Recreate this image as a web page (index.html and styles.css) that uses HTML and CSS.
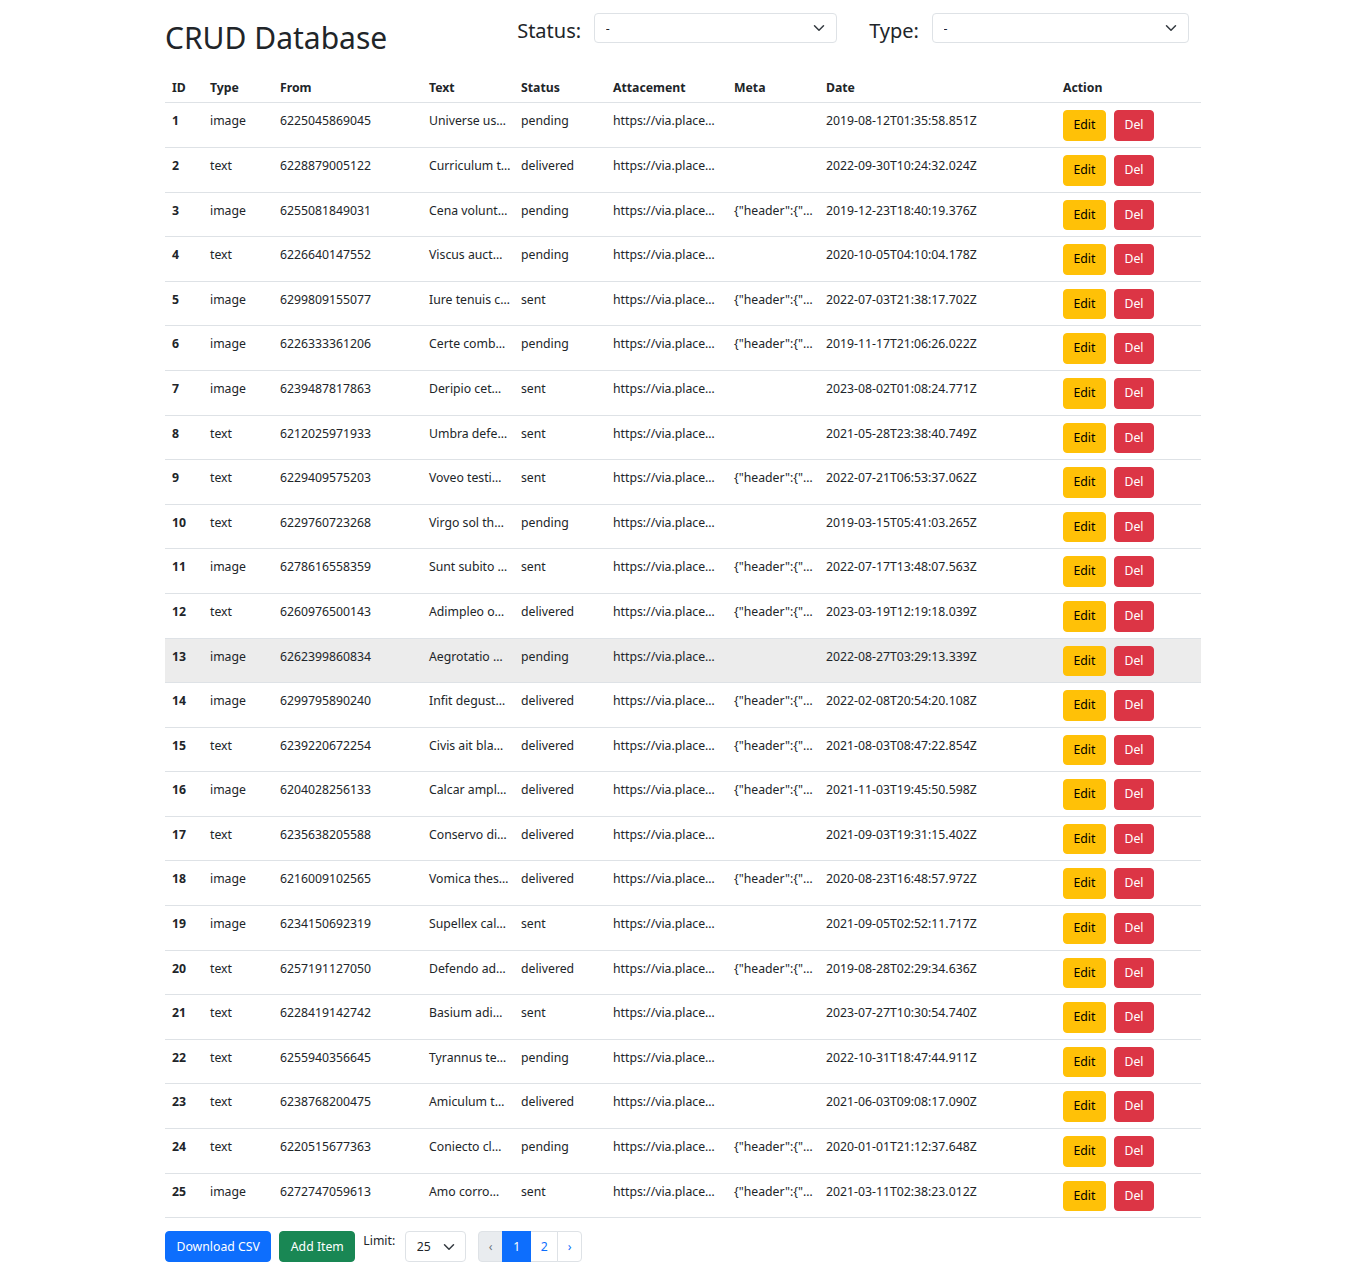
FILE: index.html
```html
<!DOCTYPE html>
<html lang="en">
<head>
<meta charset="utf-8">
<title>CRUD Database</title>
<link rel="stylesheet" href="styles.css">
</head>
<body>
<div class="container">
  <div class="topbar">
    <h1 class="title">CRUD Database</h1>
    <div class="filters">
      <div class="filter">
        <label class="filter-label">Status:</label>
        <div class="select-wrap select-status">
          <select class="form-select"><option>-</option></select>
          <svg class="chev" viewBox="0 0 16 16" width="12" height="12"><path d="m2 5 6 6 6-6" fill="none" stroke="#343a40" stroke-width="2" stroke-linecap="round" stroke-linejoin="round"/></svg>
        </div>
      </div>
      <div class="filter">
        <label class="filter-label">Type:</label>
        <div class="select-wrap select-type">
          <select class="form-select"><option>-</option></select>
          <svg class="chev" viewBox="0 0 16 16" width="12" height="12"><path d="m2 5 6 6 6-6" fill="none" stroke="#343a40" stroke-width="2" stroke-linecap="round" stroke-linejoin="round"/></svg>
        </div>
      </div>
    </div>
  </div>

  <table class="table">
    <colgroup>
      <col class="c-id"><col class="c-type"><col class="c-from"><col class="c-text"><col class="c-status"><col class="c-att"><col class="c-meta"><col class="c-date"><col class="c-action">
    </colgroup>
    <thead>
      <tr><th>ID</th><th>Type</th><th>From</th><th>Text</th><th>Status</th><th>Attacement</th><th>Meta</th><th>Date</th><th>Action</th></tr>
    </thead>
    <tbody>
      <tr><th>1</th><td>image</td><td>6225045869045</td><td>Universe us…</td><td>pending</td><td>https://via.place…</td><td></td><td>2019-08-12T01:35:58.851Z</td><td class="act"><div class="actions"><button class="btn btn-edit">Edit</button><button class="btn btn-del">Del</button></div></td></tr>
      <tr><th>2</th><td>text</td><td>6228879005122</td><td>Curriculum t…</td><td>delivered</td><td>https://via.place…</td><td></td><td>2022-09-30T10:24:32.024Z</td><td class="act"><div class="actions"><button class="btn btn-edit">Edit</button><button class="btn btn-del">Del</button></div></td></tr>
      <tr><th>3</th><td>image</td><td>6255081849031</td><td>Cena volunt…</td><td>pending</td><td>https://via.place…</td><td>{"header":{"…</td><td>2019-12-23T18:40:19.376Z</td><td class="act"><div class="actions"><button class="btn btn-edit">Edit</button><button class="btn btn-del">Del</button></div></td></tr>
      <tr><th>4</th><td>text</td><td>6226640147552</td><td>Viscus auct…</td><td>pending</td><td>https://via.place…</td><td></td><td>2020-10-05T04:10:04.178Z</td><td class="act"><div class="actions"><button class="btn btn-edit">Edit</button><button class="btn btn-del">Del</button></div></td></tr>
      <tr><th>5</th><td>image</td><td>6299809155077</td><td>Iure tenuis c…</td><td>sent</td><td>https://via.place…</td><td>{"header":{"…</td><td>2022-07-03T21:38:17.702Z</td><td class="act"><div class="actions"><button class="btn btn-edit">Edit</button><button class="btn btn-del">Del</button></div></td></tr>
      <tr><th>6</th><td>image</td><td>6226333361206</td><td>Certe comb…</td><td>pending</td><td>https://via.place…</td><td>{"header":{"…</td><td>2019-11-17T21:06:26.022Z</td><td class="act"><div class="actions"><button class="btn btn-edit">Edit</button><button class="btn btn-del">Del</button></div></td></tr>
      <tr><th>7</th><td>image</td><td>6239487817863</td><td>Deripio cet…</td><td>sent</td><td>https://via.place…</td><td></td><td>2023-08-02T01:08:24.771Z</td><td class="act"><div class="actions"><button class="btn btn-edit">Edit</button><button class="btn btn-del">Del</button></div></td></tr>
      <tr><th>8</th><td>text</td><td>6212025971933</td><td>Umbra defe…</td><td>sent</td><td>https://via.place…</td><td></td><td>2021-05-28T23:38:40.749Z</td><td class="act"><div class="actions"><button class="btn btn-edit">Edit</button><button class="btn btn-del">Del</button></div></td></tr>
      <tr><th>9</th><td>text</td><td>6229409575203</td><td>Voveo testi…</td><td>sent</td><td>https://via.place…</td><td>{"header":{"…</td><td>2022-07-21T06:53:37.062Z</td><td class="act"><div class="actions"><button class="btn btn-edit">Edit</button><button class="btn btn-del">Del</button></div></td></tr>
      <tr><th>10</th><td>text</td><td>6229760723268</td><td>Virgo sol th…</td><td>pending</td><td>https://via.place…</td><td></td><td>2019-03-15T05:41:03.265Z</td><td class="act"><div class="actions"><button class="btn btn-edit">Edit</button><button class="btn btn-del">Del</button></div></td></tr>
      <tr><th>11</th><td>image</td><td>6278616558359</td><td>Sunt subito …</td><td>sent</td><td>https://via.place…</td><td>{"header":{"…</td><td>2022-07-17T13:48:07.563Z</td><td class="act"><div class="actions"><button class="btn btn-edit">Edit</button><button class="btn btn-del">Del</button></div></td></tr>
      <tr><th>12</th><td>text</td><td>6260976500143</td><td>Adimpleo o…</td><td>delivered</td><td>https://via.place…</td><td>{"header":{"…</td><td>2023-03-19T12:19:18.039Z</td><td class="act"><div class="actions"><button class="btn btn-edit">Edit</button><button class="btn btn-del">Del</button></div></td></tr>
      <tr class="hover"><th>13</th><td>image</td><td>6262399860834</td><td>Aegrotatio …</td><td>pending</td><td>https://via.place…</td><td></td><td>2022-08-27T03:29:13.339Z</td><td class="act"><div class="actions"><button class="btn btn-edit">Edit</button><button class="btn btn-del">Del</button></div></td></tr>
      <tr><th>14</th><td>image</td><td>6299795890240</td><td>Infit degust…</td><td>delivered</td><td>https://via.place…</td><td>{"header":{"…</td><td>2022-02-08T20:54:20.108Z</td><td class="act"><div class="actions"><button class="btn btn-edit">Edit</button><button class="btn btn-del">Del</button></div></td></tr>
      <tr><th>15</th><td>text</td><td>6239220672254</td><td>Civis ait bla…</td><td>delivered</td><td>https://via.place…</td><td>{"header":{"…</td><td>2021-08-03T08:47:22.854Z</td><td class="act"><div class="actions"><button class="btn btn-edit">Edit</button><button class="btn btn-del">Del</button></div></td></tr>
      <tr><th>16</th><td>image</td><td>6204028256133</td><td>Calcar ampl…</td><td>delivered</td><td>https://via.place…</td><td>{"header":{"…</td><td>2021-11-03T19:45:50.598Z</td><td class="act"><div class="actions"><button class="btn btn-edit">Edit</button><button class="btn btn-del">Del</button></div></td></tr>
      <tr><th>17</th><td>text</td><td>6235638205588</td><td>Conservo di…</td><td>delivered</td><td>https://via.place…</td><td></td><td>2021-09-03T19:31:15.402Z</td><td class="act"><div class="actions"><button class="btn btn-edit">Edit</button><button class="btn btn-del">Del</button></div></td></tr>
      <tr><th>18</th><td>image</td><td>6216009102565</td><td>Vomica thes…</td><td>delivered</td><td>https://via.place…</td><td>{"header":{"…</td><td>2020-08-23T16:48:57.972Z</td><td class="act"><div class="actions"><button class="btn btn-edit">Edit</button><button class="btn btn-del">Del</button></div></td></tr>
      <tr><th>19</th><td>image</td><td>6234150692319</td><td>Supellex cal…</td><td>sent</td><td>https://via.place…</td><td></td><td>2021-09-05T02:52:11.717Z</td><td class="act"><div class="actions"><button class="btn btn-edit">Edit</button><button class="btn btn-del">Del</button></div></td></tr>
      <tr><th>20</th><td>text</td><td>6257191127050</td><td>Defendo ad…</td><td>delivered</td><td>https://via.place…</td><td>{"header":{"…</td><td>2019-08-28T02:29:34.636Z</td><td class="act"><div class="actions"><button class="btn btn-edit">Edit</button><button class="btn btn-del">Del</button></div></td></tr>
      <tr><th>21</th><td>text</td><td>6228419142742</td><td>Basium adi…</td><td>sent</td><td>https://via.place…</td><td></td><td>2023-07-27T10:30:54.740Z</td><td class="act"><div class="actions"><button class="btn btn-edit">Edit</button><button class="btn btn-del">Del</button></div></td></tr>
      <tr><th>22</th><td>text</td><td>6255940356645</td><td>Tyrannus te…</td><td>pending</td><td>https://via.place…</td><td></td><td>2022-10-31T18:47:44.911Z</td><td class="act"><div class="actions"><button class="btn btn-edit">Edit</button><button class="btn btn-del">Del</button></div></td></tr>
      <tr><th>23</th><td>text</td><td>6238768200475</td><td>Amiculum t…</td><td>delivered</td><td>https://via.place…</td><td></td><td>2021-06-03T09:08:17.090Z</td><td class="act"><div class="actions"><button class="btn btn-edit">Edit</button><button class="btn btn-del">Del</button></div></td></tr>
      <tr><th>24</th><td>text</td><td>6220515677363</td><td>Coniecto cl…</td><td>pending</td><td>https://via.place…</td><td>{"header":{"…</td><td>2020-01-01T21:12:37.648Z</td><td class="act"><div class="actions"><button class="btn btn-edit">Edit</button><button class="btn btn-del">Del</button></div></td></tr>
      <tr><th>25</th><td>image</td><td>6272747059613</td><td>Amo corro…</td><td>sent</td><td>https://via.place…</td><td>{"header":{"…</td><td>2021-03-11T02:38:23.012Z</td><td class="act"><div class="actions"><button class="btn btn-edit">Edit</button><button class="btn btn-del">Del</button></div></td></tr>
    </tbody>
  </table>

  <div class="footer">
    <button class="btn btn-lg-pad btn-primary">Download CSV</button>
    <button class="btn btn-lg-pad btn-success">Add Item</button>
    <span class="limit-label">Limit:</span>
    <div class="select-wrap select-limit">
      <select class="form-select"><option>25</option></select>
      <svg class="chev" viewBox="0 0 16 16" width="12" height="12"><path d="m2 5 6 6 6-6" fill="none" stroke="#343a40" stroke-width="2" stroke-linecap="round" stroke-linejoin="round"/></svg>
    </div>
    <ul class="pagination">
      <li class="page-item disabled"><span class="page-link">‹</span></li>
      <li class="page-item active"><span class="page-link">1</span></li>
      <li class="page-item"><span class="page-link">2</span></li>
      <li class="page-item"><span class="page-link">›</span></li>
    </ul>
  </div>
</div>
</body>
</html>
```

FILE: styles.css
```css
* { box-sizing: border-box; }
body {
  margin: 0;
  font-family: "Noto Sans", "Open Sans", sans-serif;
  font-size: 12.25px;
  line-height: 1.5;
  color: #212529;
  background: #fff;
}
.container {
  width: 1036px;
  margin: 0 auto;
}
.topbar {
  display: flex;
  align-items: flex-start;
  padding-top: 13px;
}
.title {
  margin: 7px 0 0 0;
  font-size: 30px;
  font-weight: 400;
  line-height: 36px;
}
.filters {
  margin-left: auto;
  margin-right: 12px;
  display: flex;
  gap: 32px;
}
.filter {
  display: flex;
  align-items: flex-start;
}
.filter-label {
  font-size: 20px;
  line-height: 30px;
  padding-top: 3px;
  margin-right: 13px;
}
.select-wrap {
  position: relative;
}
.form-select {
  appearance: none;
  -webkit-appearance: none;
  display: block;
  width: 100%;
  height: 30px;
  padding: 0 30px 0 10.5px;
  font-family: inherit;
  font-size: 12.25px;
  color: #212529;
  background: #fff;
  border: 1px solid #dee2e6;
  border-radius: 4px;
  outline: none;
}
.chev {
  position: absolute;
  right: 12px;
  top: 9px;
  pointer-events: none;
}
.select-status { width: 243px; }
.select-type { width: 257px; }

.table {
  width: 1036px;
  margin-top: 16px;
  border-collapse: collapse;
  table-layout: fixed;
}
.c-id { width: 38px; }
.c-type { width: 70px; }
.c-from { width: 149px; }
.c-text { width: 92px; }
.c-status { width: 92px; }
.c-att { width: 121px; }
.c-meta { width: 92px; }
.c-date { width: 237px; }
.c-action { width: 145px; }

.table th, .table td {
  text-align: left;
  vertical-align: top;
  border-bottom: 1px solid #dee2e6;
  white-space: nowrap;
  overflow: hidden;
}
.table thead th {
  padding: 7px 7px 5px 7px;
  font-weight: 700;
}
.table tbody th, .table tbody td {
  padding: 9px 7px 4px 7px;
}
.table tbody td.act {
  padding: 7px 7px 6px 7px;
}
.table tbody th { font-weight: 700; }
.table tbody tr.hover th, .table tbody tr.hover td {
  background: #ececec;
}
.actions {
  display: flex;
  gap: 8px;
}
.btn {
  display: inline-block;
  height: 30.6px;
  padding: 0 9.5px;
  font-family: inherit;
  font-size: 12.25px;
  line-height: 28.6px;
  border: 1px solid transparent;
  border-radius: 4px;
  cursor: pointer;
}
.btn-lg-pad { padding: 0 10.5px; height: 31px; line-height: 29px; }
.btn-edit { background: #ffc107; border-color: #ffc107; color: #000; }
.btn-del { background: #dc3545; border-color: #dc3545; color: #fff; }
.btn-primary { background: #0d6efd; border-color: #0d6efd; color: #fff; }
.btn-success { background: #198754; border-color: #198754; color: #fff; }

.footer {
  display: flex;
  align-items: flex-start;
  margin-top: 13px;
  gap: 8px;
}
.limit-label {
  margin-top: 1px;
  margin-right: 2px;
}
.select-limit { width: 61px; }
.select-limit .form-select { height: 31px; }
.select-limit .chev { top: 10px; right: 11px; }
.pagination {
  display: flex;
  list-style: none;
  margin: 0 0 0 4px;
  padding: 0;
}
.page-link {
  display: block;
  height: 31px;
  line-height: 29px;
  padding: 0;
  border: 1px solid #dee2e6;
  margin-left: -1px;
  color: #0d6efd;
  background: #fff;
  text-align: center;
}
.page-item:first-child .page-link {
  margin-left: 0;
  width: 25px;
  border-radius: 4px 0 0 4px;
}
.page-item:last-child .page-link {
  width: 25px;
  border-radius: 0 4px 4px 0;
}
.page-item.disabled .page-link {
  background: #e9ecef;
  color: #6c757d;
}
.page-item.active .page-link {
  width: 29px;
  background: #0d6efd;
  border-color: #0d6efd;
  color: #fff;
  position: relative;
  z-index: 1;
}
.page-item:nth-child(3) .page-link { width: 28px; }
```
